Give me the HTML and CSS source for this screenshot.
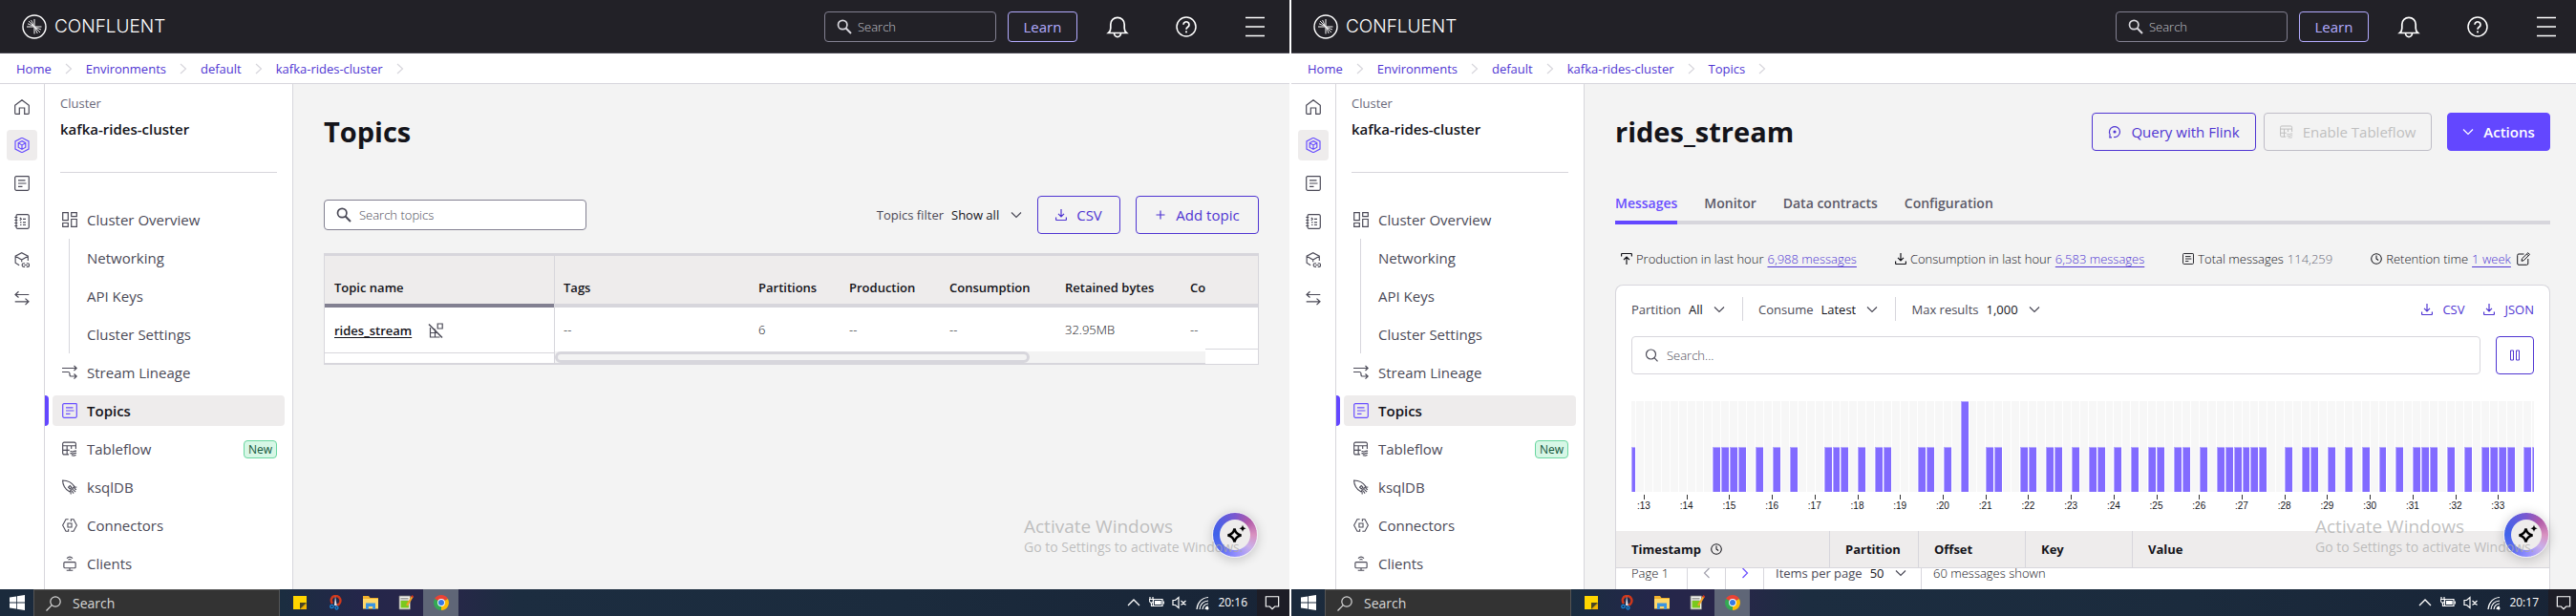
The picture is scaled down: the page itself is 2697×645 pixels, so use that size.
FILE: index.html
```
<!DOCTYPE html>
<html lang="en">
<head>
<meta charset="utf-8">
<title>Confluent Cloud</title>
<link rel="stylesheet" href="styles.css">
</head>
<body>
<svg class="sprite" aria-hidden="true">
  <symbol id="logo" viewBox="0 0 26 26"><circle cx="13" cy="13" r="12" stroke-width="1.4"/><path d="M5 13h15.500M13 5v15.500" stroke-width="1"/><path d="M12.500 12.500L7 7M12.500 12.500L6 9.800M12.500 12.500L9.600 6M13.500 13.500L19 19M13.500 13.500L20 16M13.500 13.500L16.200 20" stroke-width=".9"/></symbol>
  <symbol id="search" viewBox="0 0 16 16"><circle cx="6.200" cy="6" r="4.700" stroke-width="1.700"/><path d="M9.600 9.500l5.400 5.500" stroke-width="2"/></symbol>
  <symbol id="search-thin" viewBox="0 0 16 16"><circle cx="7.500" cy="7" r="5"/><path d="M11 10.700l3.500 3.600"/></symbol>
  <symbol id="bell" viewBox="0 0 24 24"><path d="M2.500 18.500c1.800-1.500 2.300-3 2.300-5V9.500a7.200 7.200 0 0 1 14.400 0v4c0 2 .5 3.500 2.300 5z M8.500 18.800a3.500 3.800 0 0 0 7 0" stroke-width="1.700"/></symbol>
  <symbol id="help" viewBox="0 0 24 24"><circle cx="12" cy="12" r="10" stroke-width="1.500"/><path d="M9 9.700a3 3 0 1 1 4.600 2.600c-1 .7-1.600 1-1.600 2.400" stroke-width="1.700"/><path d="M12 16.400v1.800" stroke-width="1.900"/></symbol>
  <symbol id="menu" viewBox="0 0 24 24"><path d="M2 2.500h20M2 12h20M2 21.500h20" stroke-width="1.600"/></symbol>
  <symbol id="crumb" viewBox="0 0 8 12"><path d="M1 1l5.500 5L1 11"/></symbol>
  <symbol id="home" viewBox="0 0 16 16"><path d="M.700 6.200L8 .700l7.300 5.500v8.400a.8.8 0 0 1-.8.8h-3.800V9H5.300v6.400H1.500a.8.8 0 0 1-.8-.8z"/></symbol>
  <symbol id="cluster" viewBox="0 0 16 16"><path d="M8 .300l7 3.600v8.200l-7 3.600-7-3.600V3.900z"/><path d="M8 3.600l3.800 2.100v4.500L8 12.400l-3.800-2.200V5.700zM4.200 5.700L8 7.900l3.800-2.200M8 7.900v4.500"/></symbol>
  <symbol id="topic" viewBox="0 0 16 16"><path d="M2 .700h12.500a.8.8 0 0 1 .8.800v12.300a1.500 1.500 0 0 1-1.500 1.500H2.200a1.500 1.500 0 0 1-1.500-1.500V2A1.300 1.300 0 0 1 2 .700zM4 4.800h7.500M4 8h8.500M4 11.300h4.500"/></symbol>
  <symbol id="notebook" viewBox="0 0 16 16"><path d="M3.500.700h10.300a1.500 1.500 0 0 1 1.500 1.500v11.600a1.500 1.500 0 0 1-1.500 1.500H3.500A1.500 1.500 0 0 1 2 13.800V2.200A1.500 1.500 0 0 1 3.500.700zM.300 3.500h3M.300 6.500h3M.300 9.500h3M.300 12.500h3M5.800 4l1.500 1.300-1.500 1.400M9 5.300h3M6 8.800h1.500M9 8.800h3M6 11.500h1.500M9 11.500h3"/></symbol>
  <symbol id="cube-link" viewBox="0 0 16 17"><path d="M5 14.500L.7 12V4.400L7.700.700l7 3.700v5.200M.700 4.600l7 4 7-4M7.700 8.600v2.400"/><path d="M11.300 12.500H10a1.900 1.900 0 0 0 0 3.800h1.300M13 12.500h1.200a1.900 1.900 0 0 1 0 3.800H13M10.600 14.400h3.300"/></symbol>
  <symbol id="swap" viewBox="0 0 16 16"><path d="M15.300 4.500H1M4.500 1.300L1 4.500l3.500 3M.700 11.800H15M11.500 8.600l3.500 3.200-3.500 3.300"/></symbol>
  <symbol id="overview" viewBox="0 0 16 16"><path d="M.700.700h5.600v8H.700zM9.700.700h5.600v4H9.700zM.700 11.500h5.600v3.800H.700zM9.700 7.500h5.600v7.800H9.700z"/></symbol>
  <symbol id="lineage" viewBox="0 0 16 16"><path d="M0 3.500h15M12.500 1L15.200 3.500 12.500 6M0 7.500h6.500c1.500 0 1.500.8 1.500 2v1.200c0 1.100.3 1.300 1.500 1.300H15M12.500 9.500l2.700 2.500-2.700 2.600"/></symbol>
  <symbol id="tableflow" viewBox="0 0 17 16"><path d="M7.500 14.300H2.200A1.500 1.500 0 0 1 .700 12.800V2.200A1.500 1.500 0 0 1 2.200.700h11.600a1.500 1.500 0 0 1 1.500 1.500V8M.700 4.500h14.600M.700 9.500h7.500M5.500 4.500v9.800M10.300 4.500V8M9 11c1.200-1.200 2 .8 3.500 0s2-1 3.500-.5M9 13.300c1.200-1.200 2 .8 3.500 0s2-1 3.500-.5M10.500 15.500c1.200-1 2 .3 3 0s1-.8 2-.3"/></symbol>
  <symbol id="rocket" viewBox="0 0 17 17"><path d="M.700 1c4 0 9 .7 13 6.800l-5.500 5.800C3.500 11.500.500 5.500.700 1zM7 8.700l1.800-1.800 1.800 1.800-1.800 1.800zM12.500 9l3.800-.5M12 11l3 3M9.500 13l.3 3.400M13.500 9.800l2.300 1.700M10.800 12.500l2 3"/></symbol>
  <symbol id="connectors" viewBox="0 0 18 16"><path d="M7.500 1H4.500L.700 8l3.800 7h3v-2.500M10.500 15h3l3.800-7-3.800-7h-3v2.500M6.700 5.700h4.600v4.600H6.700z"/></symbol>
  <symbol id="clients" viewBox="0 0 16 17"><path d="M2.500 7h11a1 1 0 0 1 1 1v4.500a1 1 0 0 1-1 1h-11a1 1 0 0 1-1-1V8a1 1 0 0 1 1-1zM8 13.500v2.600M4.500 16.200h7M4.800 2.700c2-2 4.400-2 6.400 0M6.400 4.500c1-1 2.200-1 3.200 0"/></symbol>
  <symbol id="chevron" viewBox="0 0 12 12"><path d="M1 3.500l5 5 5-5"/></symbol>
  <symbol id="left" viewBox="0 0 12 12"><path d="M8.500 1l-5 5 5 5"/></symbol>
  <symbol id="right" viewBox="0 0 12 12"><path d="M3.500 1l5 5-5 5"/></symbol>
  <symbol id="download" viewBox="0 0 12 12"><path d="M6 0v7.500M3 4.800l3 3 3-3M.600 8.500v2.200c0 .5.300.8.800.8h9.200c.5 0 .8-.3.800-.8V8.500"/></symbol>
  <symbol id="upload" viewBox="0 0 12 12"><path d="M6 12V4.500M3 7l3-3 3 3M.600 3.500V1.300c0-.5.300-.8.800-.8h9.200c.5 0 .8.3.8.8v2.200"/></symbol>
  <symbol id="plus" viewBox="0 0 12 12"><path d="M1.500 6h9M6 1.500v9"/></symbol>
  <symbol id="flink" viewBox="0 0 14 14"><path d="M2 12.500V9M1.200 12.800H4M2.300 10A5.500 5.500 0 1 1 6 12.500"/><circle cx="7" cy="7" r="1" fill="currentColor"/></symbol>
  <symbol id="clock" viewBox="0 0 14 14"><circle cx="7" cy="7" r="6.200"/><path d="M7 3v4l2.500 1.700"/></symbol>
  <symbol id="edit" viewBox="0 0 14 14"><path d="M7.500 2H2a1.300 1.300 0 0 0-1.300 1.300V12A1.300 1.300 0 0 0 2 13.300h8.500A1.300 1.300 0 0 0 11.800 12V7M5 9.300l.5-2.500L11.800.700l1.700 1.700-6.200 6.300zM10.500 2l1.700 1.700" stroke-width="1"/></symbol>
  <symbol id="pause" viewBox="0 0 12 12"><path d="M1.500 1h3v10h-3zM7.500 1h3v10h-3z" stroke-width="1"/></symbol>
  <symbol id="no-schema" viewBox="0 0 16 16"><path d="M10.200 1h5v5h-5zM7.500 7v8M2.500 5v10h10M2.500 10.500h7M5 6.500h2.500"/><path d="M1 1.500l14 14" stroke-width="1.500"/></symbol>
  <symbol id="sparkle" viewBox="0 0 24 24"><path d="M11.500 5.500c.9 4.400 2.600 6.100 7 7-4.400.9-6.100 2.600-7 7-.9-4.400-2.600-6.100-7-7 4.400-.9 6.100-2.600 7-7z" fill="none" stroke="#000" stroke-width="2.500"/><path d="M20 1.500c.5 2.500 1.300 3.300 3.700 3.800-2.400.5-3.200 1.300-3.700 3.800-.5-2.500-1.300-3.300-3.700-3.800 2.400-.5 3.200-1.300 3.700-3.800z" fill="#000" stroke="none"/></symbol>
  <symbol id="win" viewBox="0 0 16 16"><path d="M0 2.400L7 1.400v6.200H0zM7.800 1.300L16 0v7.600H7.800zM0 8.400h7v6.200l-7-1zM7.800 8.400H16V16l-8.200-1.200z" fill="#fff" stroke="none"/></symbol>
  <symbol id="find" viewBox="0 0 16 16"><circle cx="10" cy="6" r="5.200"/><path d="M6.300 9.700L.500 15.500"/></symbol>
  <symbol id="sticky" viewBox="0 0 16 16"><path d="M1 1h14v8l-6 6H1z" fill="#ffd500" stroke="none"/><path d="M8 8h7l-7 7z" fill="#4b4524" stroke="none"/><path d="M15 9v6H8.500z" fill="#f4b400" stroke="none"/></symbol>
  <symbol id="snip" viewBox="0 0 16 16"><path d="M5 9C2.500 5.500 4 1 8.500 1s6.500 5 3.500 8.500c-1 1.200-2.500 1-3 .5" stroke="#d1381b" stroke-width="2.400"/><path d="M8 1l1.700 10H7z" fill="#dfe6ee" stroke="none"/><circle cx="4.500" cy="12" r="1.700" stroke="#1684d6" stroke-width="1.300"/><circle cx="9.500" cy="13.500" r="1.500" stroke="#1684d6" stroke-width="1.300"/></symbol>
  <symbol id="folder" viewBox="0 0 16 16"><path d="M0 1h6l1.500 2H16v11H0z" fill="#f0b02c" stroke="none"/><path d="M0 4h16v10.500H0z" fill="#ffd868" stroke="none"/><path d="M3 8.500h10V15h-2.800v-3H5.800v3H3z" fill="#3a94e0" stroke="none"/></symbol>
  <symbol id="notepad" viewBox="0 0 16 16"><path d="M1 1h11.500v14H1z" fill="#f2f2ee" stroke="#777" stroke-width=".8"/><path d="M2.500 6h8.500v7.500H2.500z" fill="#7ac81e" stroke="none"/><path d="M2.500 3.500h8M2.500 5h8" stroke="#888" stroke-width=".8"/><path d="M14.800 1.500L9 11" stroke="#f2a127" stroke-width="2.200"/><path d="M15.300.700l-1 1.600" stroke="#d03020" stroke-width="2.200"/></symbol>
  <symbol id="chrome" viewBox="0 0 16 16"><path d="M8 8L1.100 4A8 8 0 0 1 14.900 4z" fill="#ea4335" stroke="none"/><path d="M8 8l6.900-4A8 8 0 0 1 8 16z" fill="#fbbc04" stroke="none"/><path d="M8 8v8A8 8 0 0 1 1.100 4z" fill="#34a853" stroke="none"/><circle cx="8" cy="8" r="3.900" fill="#fff" stroke="none"/><circle cx="8" cy="8" r="3" fill="#3578e5" stroke="none"/></symbol>
  <symbol id="tray-up" viewBox="0 0 16 16"><path d="M2 11l6-6 6 6" stroke-width="1.300"/></symbol>
  <symbol id="battery" viewBox="0 0 16 16"><path d="M4.500 4.500H14v7H4.500z"/><path d="M6 6h6.700v4H6z" fill="#fff" stroke="none"/><path d="M15.300 6.500v3M1 2v2M4 2v2M0 4.500h4.500v2L3.500 8h-2L.500 6.500zM2.500 8v3.500h2"/></symbol>
  <symbol id="mute" viewBox="0 0 16 16"><path d="M1 5.500h2.500L7 2.500v11L3.500 10.500H1zM9.500 6l5 4.500M14.500 6l-5 4.500" stroke-width="1.200"/></symbol>
  <symbol id="wifi" viewBox="0 0 16 16"><path d="M2 15C2.500 8 7 3 14 2.500M5 15c.5-5 4-8.500 9-9M8 15c.4-3.300 2.700-5.600 6-6M11 15c.2-1.600 1.400-2.800 3-3"/><circle cx="13" cy="14" r="1.500" fill="#fff" stroke="none"/></symbol>
  <symbol id="notify" viewBox="0 0 18 16"><path d="M1.500 1h15v11.500H12l-3 3-3-3H1.500z" stroke-width="1.300"/></symbol>
</svg>

<main class="desk">
<section class="window">
  <header class="top">
    <a class="brand" href="#"><svg class="logo"><use href="#logo"/></svg><span>CONFLUENT</span></a>
    <label class="top-search"><svg class="i16"><use href="#search"/></svg><input type="text" placeholder="Search" aria-label="Search"></label>
    <button class="learn">Learn</button>
    <div class="top-icons">
      <button class="bare" aria-label="Notifications"><svg class="i24"><use href="#bell"/></svg></button>
      <button class="bare" aria-label="Help"><svg class="i24"><use href="#help"/></svg></button>
      <button class="bare" aria-label="Menu"><svg class="i24"><use href="#menu"/></svg></button>
    </div>
  </header>
  <nav class="crumbs">
    <a href="#">Home</a><svg><use href="#crumb"/></svg>
    <a href="#">Environments</a><svg><use href="#crumb"/></svg>
    <a href="#">default</a><svg><use href="#crumb"/></svg>
    <a href="#">kafka-rides-cluster</a><svg><use href="#crumb"/></svg>
  </nav>
  <div class="body">
    <nav class="rail">
      <a href="#"><svg class="i16"><use href="#home"/></svg></a>
      <a href="#" class="on"><svg class="i16"><use href="#cluster"/></svg></a>
      <a href="#"><svg class="i16"><use href="#topic"/></svg></a>
      <a href="#"><svg class="i16"><use href="#notebook"/></svg></a>
      <a href="#"><svg class="i16"><use href="#cube-link"/></svg></a>
      <a href="#"><svg class="i16"><use href="#swap"/></svg></a>
    </nav>
    <aside class="side">
      <div class="side-head"><span>Cluster</span><strong>kafka-rides-cluster</strong></div>
      <nav class="menu">
        <a href="#"><svg class="i16"><use href="#overview"/></svg>Cluster Overview</a>
        <div class="sub"><a href="#">Networking</a><a href="#">API Keys</a><a href="#">Cluster Settings</a></div>
        <a href="#"><svg class="i16"><use href="#lineage"/></svg>Stream Lineage</a>
        <a href="#" class="on"><svg class="i16"><use href="#topic"/></svg>Topics</a>
        <a href="#"><svg class="i16"><use href="#tableflow"/></svg>Tableflow<span class="badge">New</span></a>
        <a href="#"><svg class="i16"><use href="#rocket"/></svg>ksqlDB</a>
        <a href="#"><svg class="i16"><use href="#connectors"/></svg>Connectors</a>
        <a href="#"><svg class="i16"><use href="#clients"/></svg>Clients</a>
      </nav>
    </aside>
    <div class="content">
      <div class="title-row"><h1>Topics</h1></div>
      <div class="tools">
        <label class="field topic-search"><svg class="i16"><use href="#search"/></svg><input type="text" placeholder="Search topics" aria-label="Search topics"></label>
        <div class="pick"><label for="tf">Topics filter</label><select id="tf"><option>Show all</option></select><svg class="i12"><use href="#chevron"/></svg></div>
        <button class="btn csv"><svg class="i12"><use href="#download"/></svg>CSV</button>
        <button class="btn add"><svg class="i12"><use href="#plus"/></svg>Add topic</button>
      </div>
      <div class="grid">
        <div class="frozen">
          <table><thead><tr><th>Topic name</th></tr></thead>
          <tbody><tr><td><div class="name"><a href="#">rides_stream</a><svg class="i16"><use href="#no-schema"/></svg></div></td></tr></tbody></table>
        </div>
        <div class="scroll">
          <table>
            <colgroup><col class="c-tags"><col class="c-part"><col class="c-prod"><col class="c-cons"><col class="c-ret"><col></colgroup>
            <thead><tr><th>Tags</th><th>Partitions</th><th>Production</th><th>Consumption</th><th>Retained bytes</th><th>Co</th></tr></thead>
            <tbody><tr><td>--</td><td>6</td><td>--</td><td>--</td><td>32.95MB</td><td>--</td></tr></tbody>
          </table>
          <div class="track"><div class="thumb"></div></div>
        </div>
        <div class="tail"><div class="tail-head"></div><div class="tail-row"></div></div>
      </div>
    </div>
  </div>
  <button class="assist" aria-label="Assistant"><span><svg><use href="#sparkle"/></svg></span></button>
  <div class="mark"><p class="mark-big">Activate Windows</p><p>Go to Settings to activate Windows.</p></div>
  <footer class="task">
    <button class="start" aria-label="Start"><svg class="i16"><use href="#win"/></svg></button>
    <label class="task-search"><svg class="i16"><use href="#find"/></svg><input type="text" placeholder="Search" aria-label="Taskbar search"></label>
    <div class="apps">
      <span><svg class="i16"><use href="#sticky"/></svg></span><span><svg class="i16"><use href="#snip"/></svg></span><span><svg class="i16"><use href="#folder"/></svg></span><span><svg class="i16"><use href="#notepad"/></svg></span><span class="on"><svg class="i16"><use href="#chrome"/></svg></span>
    </div>
    <div class="tray"><svg class="i16"><use href="#tray-up"/></svg><svg class="i16"><use href="#battery"/></svg><svg class="i16"><use href="#mute"/></svg><svg class="i16"><use href="#wifi"/></svg><time>20:16</time></div>
    <div class="note"><svg class="i16"><use href="#notify"/></svg></div>
  </footer>
</section>

<section class="window cut">
  <header class="top">
    <a class="brand" href="#"><svg class="logo"><use href="#logo"/></svg><span>CONFLUENT</span></a>
    <label class="top-search"><svg class="i16"><use href="#search"/></svg><input type="text" placeholder="Search" aria-label="Search"></label>
    <button class="learn">Learn</button>
    <div class="top-icons">
      <button class="bare" aria-label="Notifications"><svg class="i24"><use href="#bell"/></svg></button>
      <button class="bare" aria-label="Help"><svg class="i24"><use href="#help"/></svg></button>
      <button class="bare" aria-label="Menu"><svg class="i24"><use href="#menu"/></svg></button>
    </div>
  </header>
  <nav class="crumbs">
    <a href="#">Home</a><svg><use href="#crumb"/></svg>
    <a href="#">Environments</a><svg><use href="#crumb"/></svg>
    <a href="#">default</a><svg><use href="#crumb"/></svg>
    <a href="#">kafka-rides-cluster</a><svg><use href="#crumb"/></svg>
    <a href="#">Topics</a><svg><use href="#crumb"/></svg>
  </nav>
  <div class="body">
    <nav class="rail">
      <a href="#"><svg class="i16"><use href="#home"/></svg></a>
      <a href="#" class="on"><svg class="i16"><use href="#cluster"/></svg></a>
      <a href="#"><svg class="i16"><use href="#topic"/></svg></a>
      <a href="#"><svg class="i16"><use href="#notebook"/></svg></a>
      <a href="#"><svg class="i16"><use href="#cube-link"/></svg></a>
      <a href="#"><svg class="i16"><use href="#swap"/></svg></a>
    </nav>
    <aside class="side">
      <div class="side-head"><span>Cluster</span><strong>kafka-rides-cluster</strong></div>
      <nav class="menu">
        <a href="#"><svg class="i16"><use href="#overview"/></svg>Cluster Overview</a>
        <div class="sub"><a href="#">Networking</a><a href="#">API Keys</a><a href="#">Cluster Settings</a></div>
        <a href="#"><svg class="i16"><use href="#lineage"/></svg>Stream Lineage</a>
        <a href="#" class="on"><svg class="i16"><use href="#topic"/></svg>Topics</a>
        <a href="#"><svg class="i16"><use href="#tableflow"/></svg>Tableflow<span class="badge">New</span></a>
        <a href="#"><svg class="i16"><use href="#rocket"/></svg>ksqlDB</a>
        <a href="#"><svg class="i16"><use href="#connectors"/></svg>Connectors</a>
        <a href="#"><svg class="i16"><use href="#clients"/></svg>Clients</a>
      </nav>
    </aside>
    <div class="content">
      <div class="title-row">
        <h1>rides_stream</h1>
        <button class="btn flink"><svg class="i14"><use href="#flink"/></svg>Query with Flink</button>
        <button class="btn flow" disabled><svg class="i14"><use href="#tableflow"/></svg>Enable Tableflow</button>
        <button class="btn solid"><svg class="i12"><use href="#chevron"/></svg>Actions</button>
      </div>
      <nav class="tabs"><a href="#" class="on">Messages</a><a href="#">Monitor</a><a href="#">Data contracts</a><a href="#">Configuration</a></nav>
      <div class="stats">
        <div><svg class="i12"><use href="#upload"/></svg>Production in last hour <a href="#">6,988 messages</a></div>
        <div><svg class="i12"><use href="#download"/></svg>Consumption in last hour <a href="#">6,583 messages</a></div>
        <div><svg class="i12"><use href="#topic"/></svg>Total messages <span>114,259</span></div>
        <div><svg class="i12"><use href="#clock"/></svg>Retention time <a href="#">1 week</a><svg class="i14"><use href="#edit"/></svg></div>
      </div>
      <div class="card">
        <div class="filters">
          <div class="pick"><label for="fp">Partition</label><select id="fp"><option>All</option></select><svg class="i12"><use href="#chevron"/></svg></div>
          <div class="pick"><label for="fc">Consume</label><select id="fc"><option>Latest</option></select><svg class="i12"><use href="#chevron"/></svg></div>
          <div class="pick"><label for="fm">Max results</label><select id="fm"><option>1,000</option></select><svg class="i12"><use href="#chevron"/></svg></div>
          <div class="exports">
            <button class="bare"><svg class="i12"><use href="#download"/></svg>CSV</button>
            <button class="bare"><svg class="i12"><use href="#download"/></svg>JSON</button>
          </div>
        </div>
        <div class="msg-search">
          <label class="field"><svg class="i16"><use href="#search-thin"/></svg><input type="text" placeholder="Search..." aria-label="Search messages"></label>
          <button class="btn square" aria-label="Pause"><svg class="i12"><use href="#pause"/></svg></button>
        </div>
        <div class="chart"><div class="bars" id="bars"></div><div class="axis" id="axis"></div></div>
        <table class="msgs">
          <thead><tr><th class="m-time"><div>Timestamp<svg class="i12"><use href="#clock"/></svg></div></th><th class="m-part">Partition</th><th class="m-off">Offset</th><th class="m-key">Key</th><th>Value</th></tr></thead>
        </table>
        <div class="pager">
          <span class="page">Page 1</span>
          <button class="bare prev" aria-label="Previous page"><svg class="i12"><use href="#left"/></svg></button>
          <button class="bare next" aria-label="Next page"><svg class="i12"><use href="#right"/></svg></button>
          <div class="pick"><label for="pp">Items per page</label><select id="pp"><option>50</option></select><svg class="i12"><use href="#chevron"/></svg></div>
          <span class="shown">60 messages shown</span>
        </div>
      </div>
    </div>
  </div>
  <button class="assist" aria-label="Assistant"><span><svg><use href="#sparkle"/></svg></span></button>
  <div class="mark"><p class="mark-big">Activate Windows</p><p>Go to Settings to activate Windows.</p></div>
  <footer class="task">
    <button class="start" aria-label="Start"><svg class="i16"><use href="#win"/></svg></button>
    <label class="task-search"><svg class="i16"><use href="#find"/></svg><input type="text" placeholder="Search" aria-label="Taskbar search"></label>
    <div class="apps">
      <span><svg class="i16"><use href="#sticky"/></svg></span><span><svg class="i16"><use href="#snip"/></svg></span><span><svg class="i16"><use href="#folder"/></svg></span><span><svg class="i16"><use href="#notepad"/></svg></span><span class="on"><svg class="i16"><use href="#chrome"/></svg></span>
    </div>
    <div class="tray"><svg class="i16"><use href="#tray-up"/></svg><svg class="i16"><use href="#battery"/></svg><svg class="i16"><use href="#mute"/></svg><svg class="i16"><use href="#wifi"/></svg><time>20:17</time></div>
    <div class="note"><svg class="i16"><use href="#notify"/></svg></div>
  </footer>
</section>
</main>
<script src="chart.js"></script>
</body>
</html>
```

FILE: chart.js
```
// Message counts in 200 ms slots; slot 0 starts at second :13.
const counts = { 37: 2 };
[-2, 8, 9, 10, 11, 13, 15, 17, 21, 22, 23, 25, 27, 28, 32, 33, 35, 40, 41, 44, 45, 47, 48, 50, 52, 53, 55, 57, 59, 60, 62, 63,
  65, 67, 68, 69, 70, 71, 72, 75, 77, 78, 80, 82, 84, 86, 88, 90, 91, 92, 94, 96, 98, 99, 100, 101, 103, 104].forEach(s => { counts[s] = 1; });
const bars = document.getElementById('bars');
for (let s = -2; s <= 104; s++) {
  const slot = document.createElement('div');
  slot.className = 'slot' + (s === -2 ? ' first' : s === 104 ? ' last' : '');
  if (counts[s]) {
    const bar = document.createElement('i');
    bar.style.height = counts[s] * 50 + '%';
    slot.append(bar);
  }
  bars.append(slot);
}
const axis = document.getElementById('axis');
for (let t = 13; t <= 33; t++) {
  const tick = document.createElement('div');
  tick.className = 'tick' + (t === 33 ? ' end' : '');
  const label = document.createElement('span');
  label.textContent = ':' + t;
  tick.append(label);
  axis.append(tick);
}
```

FILE: styles.css
```
* { box-sizing: border-box; }
body { margin: 0; background: #fff; color: #14141a; font: 13px/20px "Open Sans", "Noto Sans", sans-serif; }
a { color: inherit; text-decoration: none; }
button, input, select { font: inherit; color: inherit; }
p, h1 { margin: 0; }
svg { fill: none; stroke: currentColor; stroke-width: 1.2; flex: none; overflow: visible; }
.sprite { position: absolute; width: 0; height: 0; }
.i12 { width: 12px; height: 12px; }
.i14 { width: 14px; height: 14px; }
.i16 { width: 16px; height: 16px; }
.i24 { width: 24px; height: 24px; }
.bare { border: 0; background: none; padding: 0; display: flex; align-items: center; }

.desk { display: grid; grid-template-columns: 1350fr 1345fr; grid-template-rows: minmax(0, 1fr); gap: 2px; height: 100vh; }
.window { --edge: 32px; position: relative; display: flex; flex-direction: column; min-width: 0; min-height: 0; overflow: hidden; background: #fff; }
.cut { --edge: 27px; }

.top { display: flex; align-items: center; height: 56px; flex: none; padding: 0 calc(var(--edge) - 8px) 0 23px; background: #222127; border-bottom: 1px solid #4a4954; color: #fff; }
.brand { display: flex; align-items: center; gap: 8px; margin-right: auto; font: 300 19px/24px Inter, sans-serif; }
.logo { width: 26px; height: 26px; }
.top-search { display: flex; align-items: center; gap: 6px; width: 180px; height: 32px; padding: 0 12px; border: 1px solid #828091; border-radius: 4px; color: #c4c3cb; }
.top-search svg { color: #d7d6dc; }
input { border: 0; padding: 0; background: none; outline: 0; min-width: 0; flex: 1; }
input::placeholder { color: inherit; opacity: 1; }
.top-search input { font-weight: 300; }
.learn { width: 73px; height: 32px; margin: 0 30px 0 12px; padding: 0; border: 1px solid #b3abff; border-radius: 4px; background: none; color: #b3abff; font-size: 15px; }
.top-icons { display: flex; align-items: center; gap: 48px; }

.crumbs { display: flex; align-items: center; height: 32px; flex: none; padding-left: 17px; border-bottom: 1px solid #d7d6dc; color: #4f35d2; }
.crumbs svg { width: 8px; height: 12px; margin: 0 14px; color: #d7d6dc; }

.body { display: flex; flex: 1; min-height: 0; }
.rail { display: flex; flex-direction: column; align-items: center; gap: 8px; width: 47px; flex: none; padding-top: 8px; border-right: 1px solid #d7d6dc; color: #4b4a57; }
.rail a { display: grid; place-items: center; width: 32px; height: 32px; flex: none; border-radius: 4px; }
.rail .on { background: #eeecec; color: #6a4fff; }

.side { width: 260px; flex: none; border-right: 1px solid #d7d6dc; overflow: hidden; color: #4b4a57; }
.side-head { display: flex; flex-direction: column; gap: 7px; height: 93px; margin: 0 16px; padding-top: 10px; border-bottom: 1px solid #d7d6dc; }
.side-head span { color: #6a697a; }
.side-head strong { font-size: 15px; font-weight: 600; color: #14141a; }
.menu { display: flex; flex-direction: column; gap: 8px; padding: 33px 8px 0; font-size: 15px; }
.menu a { position: relative; display: flex; align-items: center; gap: 10px; height: 32px; padding: 0 8px 0 10px; border-radius: 4px; }
.menu .on { background: #eeecec; color: #14141a; font-weight: 600; }
.menu .on::before { content: ""; position: absolute; left: -8px; top: 0; width: 4px; height: 32px; background: #6347ff; border-radius: 0 4px 4px 0; }
.menu .on svg { color: #6a4fff; }
.sub { display: flex; flex-direction: column; gap: 8px; margin: -4px 0 -4px 17px; padding: 4px 0; border-left: 1px solid #d7d6dc; }
.sub a { padding-left: 18px; }
.badge { margin-left: auto; padding: 0 4px; border: 1px solid #6ad6a0; border-radius: 4px; background: #d7f7e6; color: #12543a; font-size: 12px; line-height: 17px; }

.content { display: flex; flex-direction: column; flex: 1; min-width: 0; padding: 0 var(--edge) 0 32px; background: #f3f3f3; }
.title-row { display: flex; align-items: center; height: 40px; margin-top: 30px; flex: none; }
h1 { margin-right: auto; font-size: 29px; line-height: 40px; font-weight: 700; }
.btn { display: flex; align-items: center; justify-content: center; gap: 10px; height: 40px; padding: 0 16px; border: 1px solid #4f35d2; border-radius: 4px; background: none; color: #4f35d2; font-size: 15px; white-space: nowrap; }
.flink { width: 172px; margin-right: 8px; }
.flow { width: 176px; margin-right: 16px; border-color: #bfbdc7; color: #bfbfbf; }
.solid { width: 108px; background: #6347ff; border-color: #6347ff; color: #fff; font-weight: 600; }
.csv { width: 87px; }
.add { width: 129px; }

.tools { display: flex; align-items: center; gap: 16px; margin: 47px 0 20px; }
.field { display: flex; align-items: center; gap: 8px; padding: 0 12px; border: 1px solid #828091; border-radius: 4px; background: #fff; color: #4b4a57; font-weight: 300; }
.topic-search { width: 275px; height: 32px; margin-right: auto; }
.pick { display: flex; align-items: center; gap: 8px; color: #4b4a57; }
select { appearance: none; border: 0; padding: 0; background: none; outline: 0; color: #14141a; height: 20px; }
.pick svg { margin-left: 3px; }

.grid { display: flex; align-items: stretch; border-top: 3px solid #d7d6dc; border-left: 1px solid #d7d6dc; border-right: 1px solid #d7d6dc; background: #fff; }
table { width: 100%; border-collapse: separate; border-spacing: 0; table-layout: fixed; }
.grid th { height: 54px; padding: 16px 0 0 9px; background: #eeecec; border-bottom: 4px solid #d7d6dc; text-align: left; font-weight: 600; white-space: nowrap; overflow: hidden; }
.grid td { padding: 0 0 0 9px; height: 46px; font-weight: 300; }
.grid .frozen th { padding-left: 10px; border-bottom-color: #828091; }
.grid .frozen td { height: 48px; padding-left: 10px; border-bottom: 1px solid #d7d6dc; }
.frozen { width: 241px; flex: none; border-right: 1px solid #d7d6dc; border-bottom: 2px solid #d7d6dc; }
.name { display: flex; align-items: center; gap: 17px; }
.name a { font-weight: 600; text-decoration: underline; text-underline-offset: 2px; }
.name svg { color: #4b4a57; }
.scroll { flex: 1; min-width: 0; border-bottom: 2px solid #d7d6dc; }
.c-tags { width: 204px; } .c-part { width: 95px; } .c-prod { width: 105px; } .c-cons { width: 121px; } .c-ret { width: 131px; }
.track { height: 12px; background: #f3f3f3; }
.thumb { width: 73%; height: 12px; border: 3px solid #d7d6dc; border-radius: 6px; }
.tail { display: flex; flex-direction: column; width: 55px; flex: none; border-bottom: 1px solid #d7d6dc; }
.tail-head { height: 54px; background: #eeecec; border-bottom: 4px solid #d7d6dc; }
.tail-row { height: 44px; border-bottom: 1px solid #d7d6dc; }

.tabs { display: flex; gap: 28px; height: 37px; margin-top: 40px; flex: none; border-bottom: 4px solid #d7d6dc; font-size: 14px; font-weight: 600; color: #5b5a68; }
.tabs a { height: 37px; padding-top: 5px; }
.tabs .on { border-bottom: 4px solid #6347ff; color: #6a4fff; }
.stats { display: flex; gap: 40px; margin: 26px 0 17px; padding-left: 6px; height: 20px; flex: none; font-weight: 300; white-space: nowrap; }
.stats div { display: flex; align-items: center; gap: 4px; }
.stats a { color: #4f35d2; text-decoration: underline; text-underline-offset: 3px; }
.stats span { color: #6a697a; }
.stats .i14 { margin-left: 2px; }

.card { flex: 1; min-height: 0; overflow: hidden; border: 1px solid #d7d6dc; border-bottom: 0; border-radius: 8px 8px 0 0; background: #fff; }
.filters { display: flex; align-items: center; padding: 12px 16px 0; }
.filters .pick { height: 25px; padding-right: 18px; margin-right: 16px; border-right: 1px solid #d7d6dc; }
.filters .pick:nth-child(3) { border: 0; }
.exports { display: flex; gap: 20px; margin-left: auto; color: #4f35d2; }
.exports button { gap: 10px; }
.msg-search { display: flex; gap: 16px; padding: 16px 16px 28px; }
.msg-search .field { flex: 1; border-color: #d7d6dc; }
.square { width: 40px; padding: 0; }
.chart { padding: 0 16px; height: 136px; }
.bars { display: flex; height: 95px; }
.slot { display: flex; align-items: flex-end; flex: 18 1 0; min-width: 0; border-right: 1px solid #fff; background: #f7f7f7; }
.slot i { flex: 1; min-width: 0; background: #826bff; border: solid #b5a8ff; border-width: 1px 0 0 1px; }
.first { flex-grow: 9; }
.last { flex: 0 0 2px; border: 0; }
.axis { display: flex; padding-top: 3px; color: #14141a; font: 10px/14px "Liberation Sans", Arial, sans-serif; }
.axis::before { content: ""; flex: 26 1 0; }
.tick { flex: 90 1 0; min-width: 0; }
.end { flex-grow: 76; }
.tick::before { content: ""; display: block; width: 1px; height: 5px; background: #333; }
.tick span { display: block; width: 24px; margin-left: -12px; text-align: center; }
.msgs { position: relative; }
.msgs th { height: 39px; padding: 0 16px; background: #eeecec; border-bottom: 1px solid #d7d6dc; border-right: 1px solid #d7d6dc; text-align: left; font-weight: 700; }
.msgs th:last-child { border-right: 0; }
.msgs div { display: flex; align-items: center; gap: 10px; }
.m-time { width: 224px; } .m-part { width: 93px; } .m-off { width: 112px; } .m-key { width: 112px; }
.pager { display: flex; padding-left: 16px; font-weight: 300; }
.pager > * { height: 28px; padding-bottom: 18px; border-right: 1px solid #d7d6dc; line-height: 10px; }
.pager label, .pager select { font-weight: 400; }
.page { width: 59px; }
.prev, .next { width: 40px; justify-content: center; }
.prev { color: #a3a2ae; }
.next { color: #6a4fff; }
.pager .pick { width: 165px; padding-left: 12px; }
.pager .shown { padding-left: 12px; border: 0; }

.assist { position: absolute; right: calc(var(--edge) + 1px); bottom: 61px; display: grid; place-items: center; width: 48px; height: 48px; padding: 0; border: 1px solid #eeecf4; border-radius: 24px; background: conic-gradient(from 0deg, #7a58cf, #b05aa8 45deg, #d992c0 90deg, #c9b0ea 130deg, #8f8cff 180deg, #5a6cf0 225deg, #3f62ea 275deg, #5a5ee0 320deg, #7a58cf); box-shadow: 0 2px 12px #0003; }
.assist span { display: grid; place-items: center; width: 32px; height: 32px; border-radius: 16px; background: #eeecec; }
.assist svg { width: 24px; height: 24px; }
.mark { position: absolute; right: calc(var(--edge) + 11px); bottom: 62px; width: 235px; color: #a8a8a8b8; font-size: 14px; white-space: nowrap; pointer-events: none; }
.mark-big { font-size: 19px; line-height: 24px; }

.task { display: flex; height: 28px; flex: none; background: linear-gradient(90deg, #1b2a3c 0, #1b2d40 22%, #24264a 28%, #29264a 34%, #1c2d40 40%, #1b2b3d 70%, #182436 100%); color: #fff; }
.start { display: grid; place-items: center; width: 35px; padding: 0; border: 0; background: none; }
.task-search { display: flex; align-items: center; gap: 12px; width: 258px; padding: 0 12px; border: 1px solid #555; border-bottom: 0; background: #333; color: #d8d8d8; font-size: 14px; }
.apps { display: flex; margin-left: 2px; }
.apps span { display: grid; place-items: center; width: 37px; }
.apps .on { background: #5f6677; }
.tray { display: flex; align-items: center; gap: 8px; margin-left: auto; padding-right: 10px; }
.tray time { font-size: 12px; }
.note { display: grid; place-items: center start; width: calc(var(--edge) + 2px); padding-left: 8px; background: #1d1d26; }
```
